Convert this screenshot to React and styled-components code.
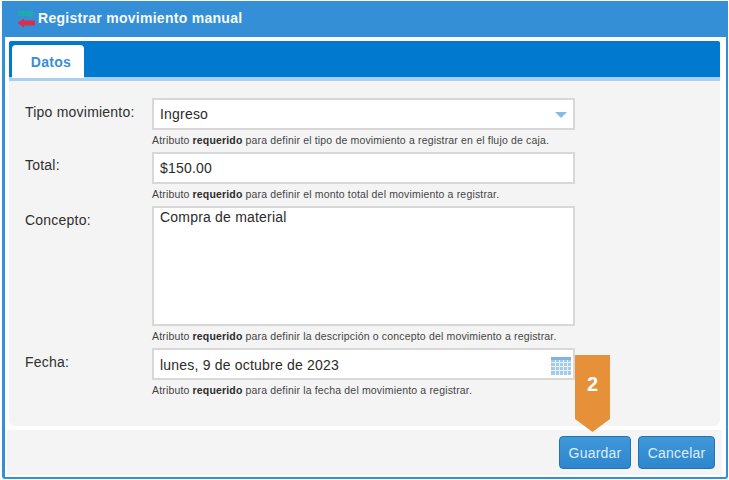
import React from "react";
import styled, { createGlobalStyle } from "styled-components";

const Global = createGlobalStyle`
  html, body { margin: 0; padding: 0; background: #fff; overflow: hidden; }
  * { box-sizing: border-box; }
`;

const Page = styled.div`
  position: relative;
  width: 729px;
  height: 480px;
  padding: 1px 1px 1px 2px;
  font-family: "Liberation Sans", Arial, sans-serif;
`;

const Dialog = styled.div`
  height: 100%;
  display: flex;
  flex-direction: column;
  background: #fff;
  border-left: 3px solid #358fd6;
  border-right: 2px solid #358fd6;
  border-bottom: 2px solid #358fd6;
  border-radius: 3px;
`;

const TitleBar = styled.div`
  height: 36px;
  flex: none;
  margin: 0 -2px 0 -3px;
  padding: 0 0 2px 15px;
  display: flex;
  align-items: center;
  gap: 2px;
  background: #358fd6;
`;

const Title = styled.span`
  color: #fff;
  font-size: 14px;
  font-weight: 700;
  letter-spacing: 0.28px;
  opacity: 0.95;
`;

const Body = styled.div`
  flex: 1;
  display: flex;
  flex-direction: column;
  padding: 4px 6px 2px 4px;
  min-height: 0;
`;

const TabStrip = styled.div`
  flex: none;
  height: 40px;
  padding: 4px 0 0 3px;
  background: #0079ce;
  border-bottom: 4px solid #a9d0ee;
  border-radius: 2px 2px 0 0;
  display: flex;
`;

const Tab = styled.div`
  width: 72px;
  height: 33px;
  margin-bottom: -1px;
  padding-left: 6px;
  background: #fff;
  border-radius: 4px 4px 0 0;
  color: #3a8ed6;
  font-size: 14px;
  font-weight: 700;
  letter-spacing: 0.3px;
  display: flex;
  align-items: center;
  justify-content: center;
`;

const Panel = styled.div`
  flex: 1;
  background: #f4f4f4;
  border-radius: 0 0 6px 6px;
  padding: 17px 0 0 16px;
  display: flex;
  flex-direction: column;
`;

const Row = styled.div`
  display: grid;
  grid-template-columns: 127px 423px;
  margin-bottom: ${(p) => p.$gap}px;
`;

const Label = styled.label`
  font-size: 14px;
  color: #2f2f2f;
  letter-spacing: 0.22px;
  line-height: 16px;
  padding-top: ${(p) => p.$top}px;
`;

const Field = styled.div`
  display: flex;
  flex-direction: column;
`;

const InputBox = styled.div`
  position: relative;
  height: ${(p) => p.$h || 32}px;
  background: #fff;
  border: 2px solid #d8d8d8;
  padding: ${(p) => p.$pt || 6}px 6px 0 6px;
  font-size: 14px;
  line-height: 16px;
  letter-spacing: 0.2px;
  color: #2b2b2b;
  display: flex;
  justify-content: space-between;
`;

const Hint = styled.div`
  font-size: 10.5px;
  line-height: 12px;
  margin-top: 4px;
  color: #444;
  letter-spacing: 0.165px;
  white-space: nowrap;
  b { color: #2c2c2c; font-weight: 700; }
`;

const Footer = styled.div`
  flex: none;
  height: 45px;
  margin: 4px -2px 0 -2px;
  background: #f4f4f4;
  display: flex;
  justify-content: flex-end;
  align-items: flex-start;
  gap: 7px;
  padding: 6px 7px 0 0;
`;

const Button = styled.button`
  width: ${(p) => p.$w}px;
  height: 33px;
  border: 1px solid #2273b4;
  border-radius: 4px;
  background: linear-gradient(#3f98da, #2f86cc);
  color: #dceefa;
  font-family: inherit;
  font-size: 14px;
  letter-spacing: 0.2px;
  padding: 0;
`;

const Marker = styled.div`
  position: absolute;
  left: 575px;
  top: 355px;
  width: 35px;
  height: 77px;
  background: #e69139;
  clip-path: polygon(0 0, 100% 0, 100% 83%, 50% 100%, 0 83%);
  color: #fff;
  font-size: 20px;
  font-weight: 700;
  text-align: center;
  line-height: 22px;
  padding-top: 18px;
`;

const Arrows = () => (
  <svg width="19" height="19" viewBox="0 0 19 19">
    <path d="M1 2h11V0l6 4.5L12 9V7H1z" fill="#20aab0" />
    <path d="M18 11.5H7V9.5L0.5 14 7 18.5v-2h11z" fill="#d92f48" />
  </svg>
);

const Caret = styled.span`
  width: 0;
  height: 0;
  margin: 6px 0 0 0;
  border-left: 6px solid transparent;
  border-right: 6px solid transparent;
  border-top: 6px solid #84bce8;
`;

const CalendarSvg = styled.svg`
  flex: none;
  margin-right: -4px;
`;

const Calendar = () => (
  <CalendarSvg width="20" height="18" viewBox="0 0 20 18">
    <rect x="0" y="0" width="20" height="18" fill="#a3cbec" />
    <rect x="0" y="0" width="20" height="3" fill="#7fb4e0" />
    {[5, 9, 13].map((y) => (
      <rect key={y} x="0" y={y} width="20" height="1" fill="#e6f1fa" />
    ))}
    {[4, 8, 12, 16].map((x) => (
      <rect key={x} x={x} y="3" width="1" height="15" fill="#e6f1fa" />
    ))}
  </CalendarSvg>
);

export default function App() {
  return (
    <Page>
      <Global />
      <Dialog>
        <TitleBar>
          <Arrows />
          <Title>Registrar movimiento manual</Title>
        </TitleBar>
        <Body>
          <TabStrip>
            <Tab>Datos</Tab>
          </TabStrip>
          <Panel>
            <Row $gap={6}>
              <Label $top={6}>Tipo movimiento:</Label>
              <Field>
                <InputBox>Ingreso<Caret /></InputBox>
                <Hint>Atributo <b>requerido</b> para definir el tipo de movimiento a registrar en el flujo de caja.</Hint>
              </Field>
            </Row>
            <Row $gap={6}>
              <Label $top={5}>Total:</Label>
              <Field>
                <InputBox>$150.00</InputBox>
                <Hint>Atributo <b>requerido</b> para definir el monto total del movimiento a registrar.</Hint>
              </Field>
            </Row>
            <Row $gap={6}>
              <Label $top={6}>Concepto:</Label>
              <Field>
                <InputBox $h={120} $pt={1}>Compra de material</InputBox>
                <Hint>Atributo <b>requerido</b> para definir la descripción o concepto del movimiento a registrar.</Hint>
              </Field>
            </Row>
            <Row $gap={0}>
              <Label $top={6}>Fecha:</Label>
              <Field>
                <InputBox $pt={7}>lunes, 9 de octubre de 2023<Calendar /></InputBox>
                <Hint>Atributo <b>requerido</b> para definir la fecha del movimiento a registrar.</Hint>
              </Field>
            </Row>
          </Panel>
          <Footer>
            <Button $w={72}>Guardar</Button>
            <Button $w={77}>Cancelar</Button>
          </Footer>
        </Body>
      </Dialog>
      <Marker>2</Marker>
    </Page>
  );
}
